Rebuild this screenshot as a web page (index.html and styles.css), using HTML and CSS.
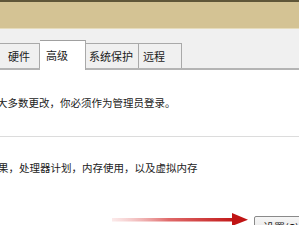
FILE: index.html
```html
<!DOCTYPE html>
<html lang="zh">
<head>
<meta charset="utf-8">
<link rel="stylesheet" href="styles.css">
</head>
<body>
<div class="window">
  <div class="titlebar"></div>
  <div class="tabarea">
    <div class="tabs">
      <div class="tab first">硬件</div>
      <div class="tab active">高级</div>
      <div class="tab">系统保护</div>
      <div class="tab">远程</div>
    </div>
  </div>
  <div class="content">
    <p class="line one">大多数更改，你必须作为管理员登录。</p>
    <div class="sep"></div>
    <p class="line two">果，处理器计划，内存使用，以及虚拟内存</p>
    <div class="action">
      <svg class="arrow" width="140" height="16" viewBox="0 0 140 16">
        <defs>
          <linearGradient id="rg" x1="0" x2="1" y1="0" y2="0">
            <stop offset="0" stop-color="#f2b8b8" stop-opacity="0.3"/>
            <stop offset="0.45" stop-color="#e06a6a"/>
            <stop offset="1" stop-color="#c01414"/>
          </linearGradient>
        </defs>
        <rect x="2" y="8" width="126" height="3.5" fill="url(#rg)"/>
        <polygon points="122,3 138,9.8 122,16" fill="#c01414"/>
      </svg>
      <div class="button">设置(S)...</div>
    </div>
  </div>
</div>
</body>
</html>
```

FILE: styles.css
```css
* { box-sizing: border-box; }
html, body {
  margin: 0;
  padding: 0;
  width: 299px;
  height: 225px;
  overflow: hidden;
  background: #ffffff;
  font-family: "Noto Sans CJK SC", "Noto Sans", sans-serif;
}
.window {
  width: 299px;
  height: 225px;
  overflow: hidden;
}
.titlebar {
  height: 29px;
  border-top: 2px solid #5f5638;
  background: #d4c394;
  border-bottom: 1px solid #e6dcbc;
}
.tabarea {
  height: 41px;
  background: #f0f0f0;
  display: flex;
  align-items: flex-end;
  border-bottom: 2px solid #b4b4b4;
}
.tabs {
  display: flex;
  align-items: flex-end;
  margin-left: -2px;
  margin-bottom: -2px;
}
.tab {
  height: 25px;
  border: 1px solid #a9a9a9;
  border-bottom: none;
  border-left: none;
  background: #f0f0f0;
  font-size: 11px;
  line-height: 24px;
  color: #1a1a1a;
  margin-bottom: 2px;
  white-space: nowrap;
  flex: none;
}
.tab.first {
  width: 42px;
  padding-left: 9px;
  border-left: 1px solid #a9a9a9;
}
.tab:nth-child(2) { width: 46px; padding-left: 6px; }
.tab:nth-child(3) { width: 53px; padding-left: 3px; }
.tab:nth-child(4) { width: 43px; padding-left: 4px; }
.tab.active {
  height: 30px;
  background: #ffffff;
  margin-bottom: 0;
  line-height: 28px;
  border-top: 1px solid #a0a0a0;
}
.content {
  background: #ffffff;
  padding-top: 26px;
}
.line {
  margin: 0;
  font-size: 10.5px;
  line-height: 14px;
  color: #222222;
  white-space: nowrap;
}
.line.one { margin-left: -3px; }
.line.two { margin-left: -2px; }
.sep {
  height: 1px;
  background: #dcdcdc;
  margin: 26px 0 24px 0;
}
.action {
  display: flex;
  align-items: flex-start;
  margin-top: 32px;
}
.arrow {
  margin-left: 110px;
  margin-top: 3px;
  flex: none;
}
.button {
  margin-left: 4px;
  margin-top: 9px;
  width: 70px;
  height: 22px;
  border: 1px solid #8a8a8a;
  border-radius: 2px;
  background: linear-gradient(#f6f6f6, #e2e2e2);
  font-size: 11px;
  line-height: 20px;
  padding-left: 8px;
  color: #1a1a1a;
  white-space: nowrap;
  flex: none;
}
```
